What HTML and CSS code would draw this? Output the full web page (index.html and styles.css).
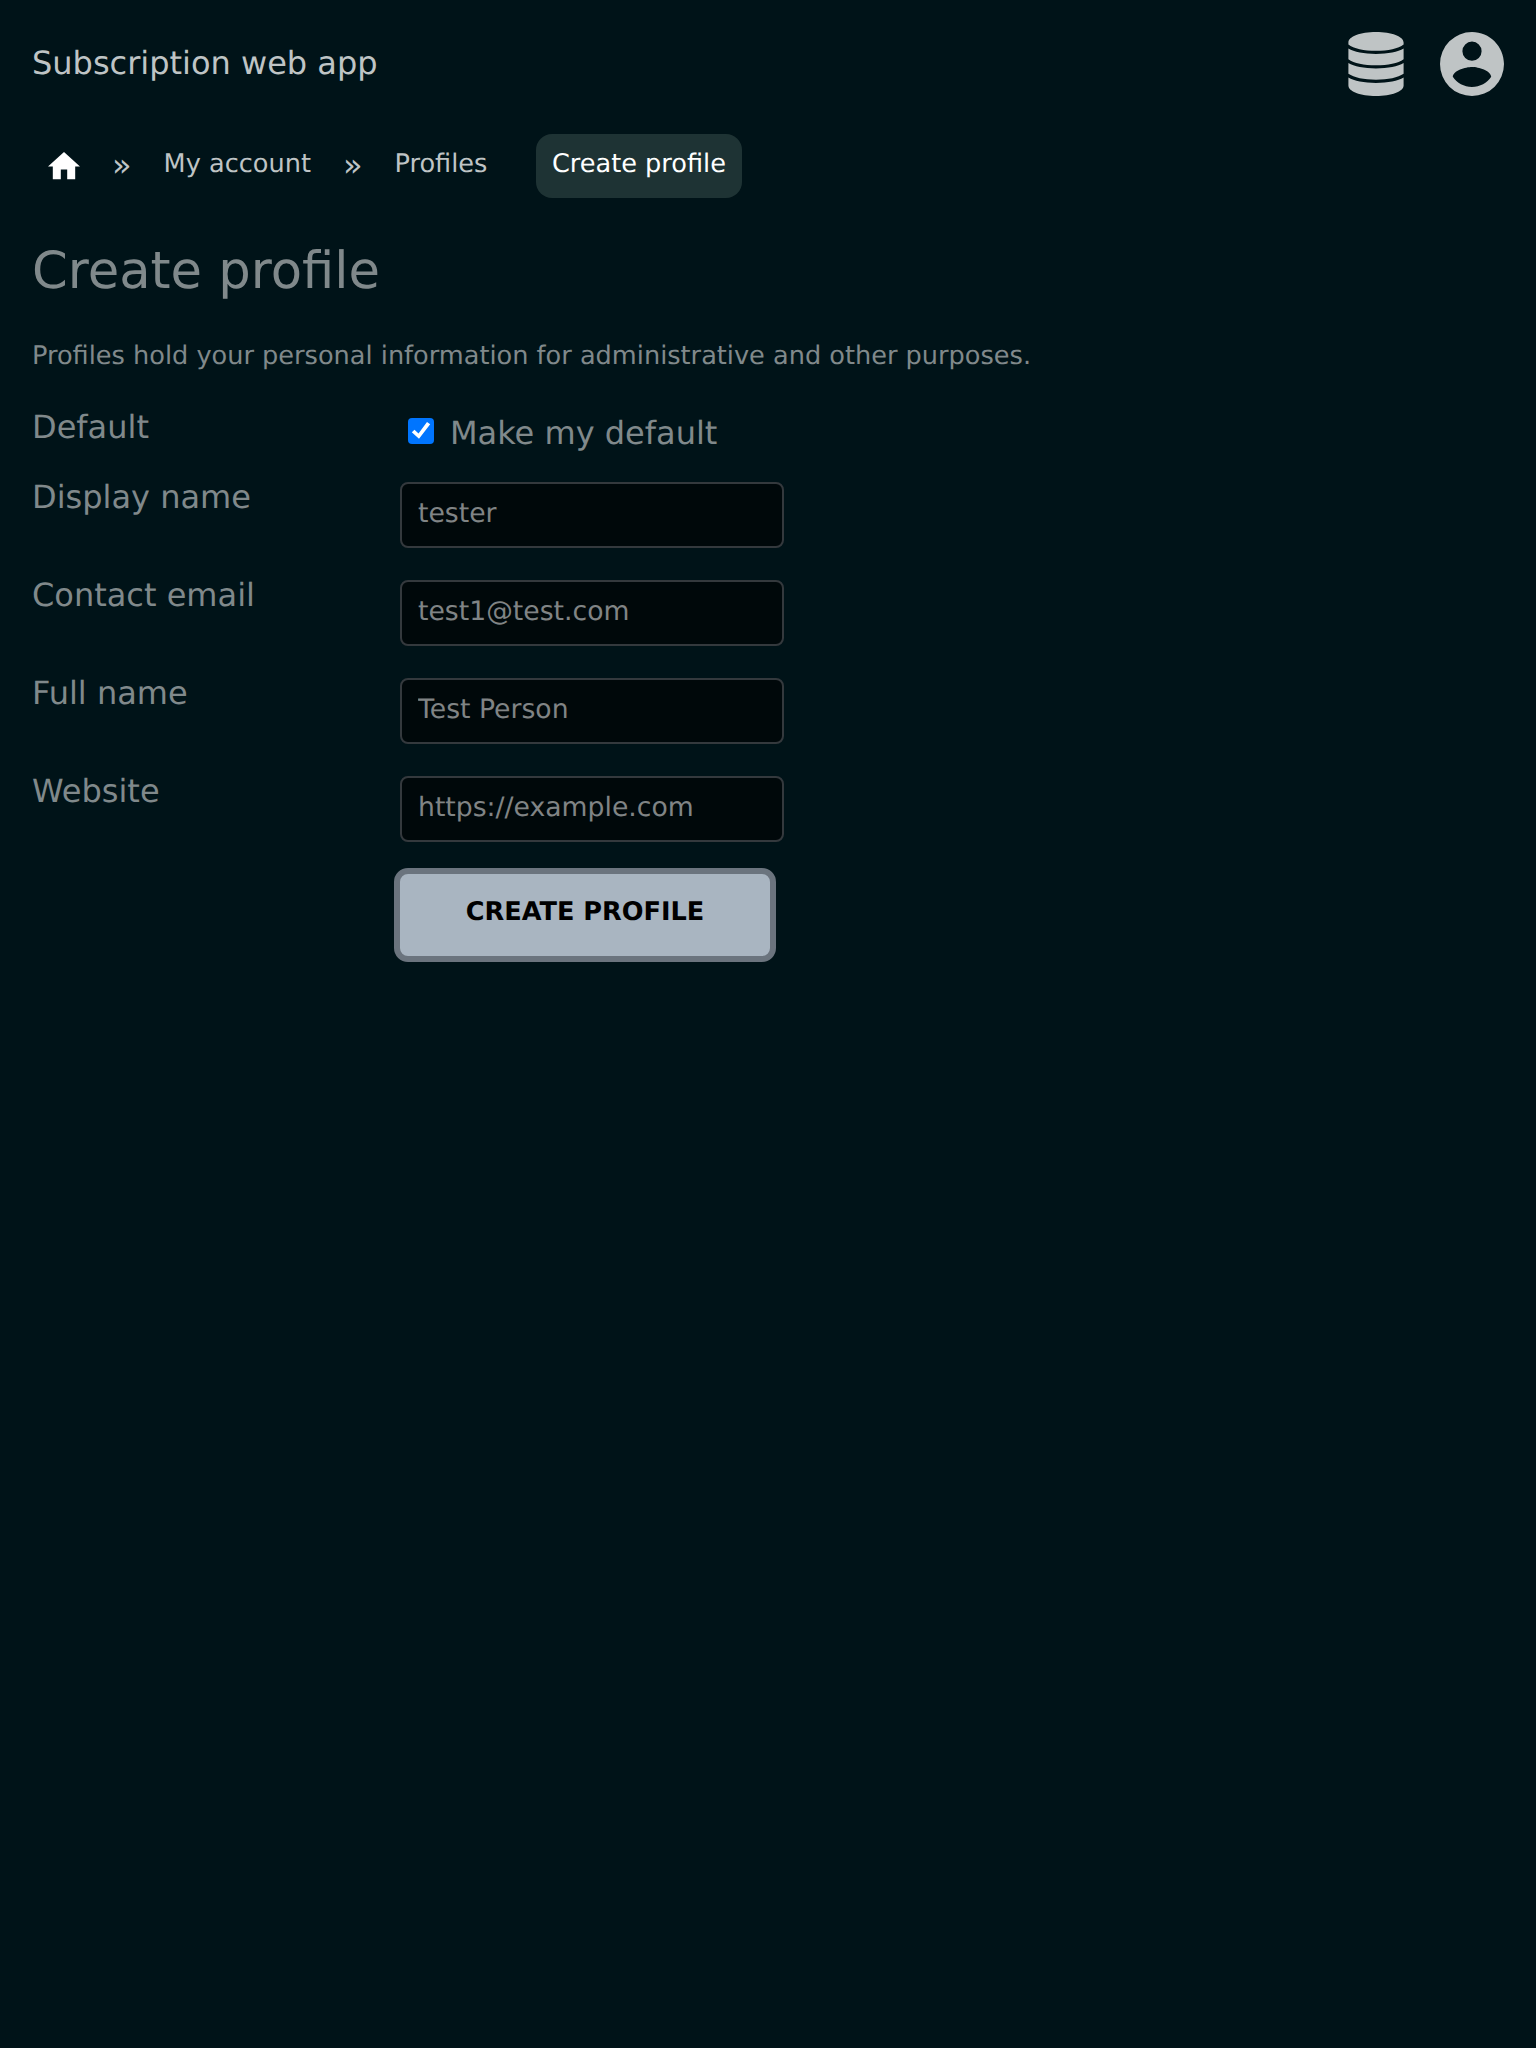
FILE: index.html
```html
<!DOCTYPE html>
<html lang="en">
<head>
<meta charset="utf-8">
<title>Create profile</title>
<link rel="stylesheet" href="styles.css">
</head>
<body>
<header class="header">
  <a class="brand">Subscription web app</a>
  <div class="actions">
    <svg class="icon-db" viewBox="0 0 56 64"><path d="M28 0C43.500 0 55.600 4.600 55.600 10.500V12.500C50.500 16.700 40 18.800 28 18.800S5.500 16.700 .4 12.500V10.500C.4 4.600 12.500 0 28 0ZM.4 16.500C6 19.900 16 21.900 28 21.900S50 19.900 55.600 16.500V27.200C50 31.200 40 33.200 28 33.200S6 31.200 .4 27.200ZM.4 31C6 34.500 16 36.400 28 36.400S50 34.500 55.600 31V41.800C50 45.700 40 47.700 28 47.700S6 45.700 .4 41.800ZM.4 45.500C6 49 16 50.900 28 50.900S50 49 55.600 45.500V53.500C55.600 59.500 43.500 64 28 64S.4 59.500 .4 53.500Z"/></svg>
    <svg class="icon-account" viewBox="2 2 20 20"><path d="M12 19.200C9.500 19.200 7.290 17.920 6 16C6.030 14 10 12.900 12 12.900S17.970 14 18 16C16.710 17.920 14.500 19.200 12 19.200M12 5A3 3 0 0 1 15 8A3 3 0 0 1 12 11A3 3 0 0 1 9 8A3 3 0 0 1 12 5M12 2A10 10 0 0 0 2 12A10 10 0 0 0 12 22A10 10 0 0 0 22 12C22 6.470 17.500 2 12 2Z"/></svg>
  </div>
</header>
<nav class="crumbs">
  <a class="crumb crumb-home"><svg class="icon-home" viewBox="2 3 20 17"><path d="M10 20V14H14V20H19V12H22L12 3L2 12H5V20H10Z"/></svg></a>
  <span class="sep">»</span>
  <a class="crumb">My account</a>
  <span class="sep">»</span>
  <a class="crumb">Profiles</a>
  <a class="crumb current">Create profile</a>
</nav>
<main class="content">
  <h1 class="title">Create profile</h1>
  <p class="intro">Profiles hold your personal information for administrative and other purposes.</p>
  <form class="form">
    <div class="row row-check">
      <span class="label">Default</span>
      <label class="check"><span class="box"><svg class="tick" viewBox="0 0 26 26"><path d="M3.800 14.300L6.500 11.800L10.500 15.500L19 4L22.200 6.200L11 20.800Z"/></svg></span>Make my default</label>
    </div>
    <div class="row"><label class="label">Display name</label><input class="input" type="text" value="tester"></div>
    <div class="row"><label class="label">Contact email</label><input class="input" type="text" value="test1@test.com"></div>
    <div class="row"><label class="label">Full name</label><input class="input" type="text" value="Test Person"></div>
    <div class="row"><label class="label">Website</label><input class="input" type="text" value="https://example.com"></div>
    <button class="submit" type="button">CREATE PROFILE</button>
  </form>
</main>
</body>
</html>
```
FILE: styles.css
```css
* { box-sizing: border-box; }
body {
  margin: 0;
  min-height: 2048px;
  background: #001318;
  color: #80898b;
  font-family: "DejaVu Sans", sans-serif;
  font-size: 32px;
  line-height: 40px;
  text-rendering: geometricPrecision;
}
.header {
  display: flex;
  justify-content: space-between;
  align-items: flex-start;
  height: 134px;
  padding: 32px 32px 0;
  color: #bfc4c5;
}
.brand { margin-top: 11px; }
.actions { display: flex; gap: 36px; }
.actions svg { height: 64px; fill: #bfc4c5; }
.icon-db { width: 56px; }
.icon-account { width: 64px; }
.crumbs {
  display: flex;
  height: 64px;
  padding-left: 32px;
  color: #bfc4c5;
  font-size: 25.6px;
  line-height: 32px;
}
.crumb { padding: 14px 16px 0; }
.crumb-home { padding-top: 18.400px; }
.icon-home { display: block; width: 32px; height: 27.200px; fill: #fff; }
.sep {
  width: 51.600px;
  padding-top: 11px;
  font-size: 32px;
  line-height: 40px;
  text-align: center;
}
.current {
  margin-left: 33px;
  padding: 14px 16.500px 0 15.500px;
  border-radius: 16px;
  background: #1e3334;
  color: #fff;
}
.content { padding: 43px 32px 0; }
.title { margin: 0; font-size: 51.200px; font-weight: 400; line-height: 60px; }
.intro { margin: 39px 0 0; font-size: 25.600px; line-height: 32px; }
.form { margin-top: 35px; }
.row {
  display: grid;
  grid-template-columns: 368px 384px;
  align-items: start;
  height: 98px;
}
.row-check { height: 75px; }
.label { margin-top: -5px; }
.row-check .label { margin-top: 0; }
.check { display: flex; padding: 6px 0 0 8px; gap: 16px; white-space: nowrap; }
.box { width: 26px; height: 26px; margin-top: 5px; border-radius: 4px; background: #0075ff; }
.tick { display: block; fill: #fff; }
.input {
  width: 384px;
  height: 66px;
  padding: 0 16px 4px;
  border: 2px solid #34393d;
  border-radius: 8px;
  background: #00080a;
  color: #808485;
  font: 26.667px/32px "DejaVu Sans", sans-serif;
  text-rendering: inherit;
}
.submit {
  display: block;
  width: 382px;
  height: 94px;
  margin: -6px 0 0 362px;
  padding: 0 0 6px;
  border: 6px solid #6b747e;
  border-radius: 14px;
  background: #a9b5c1;
  color: #000;
  font: 700 25.600px/32px "DejaVu Sans", sans-serif;
  text-rendering: inherit;
}
```
